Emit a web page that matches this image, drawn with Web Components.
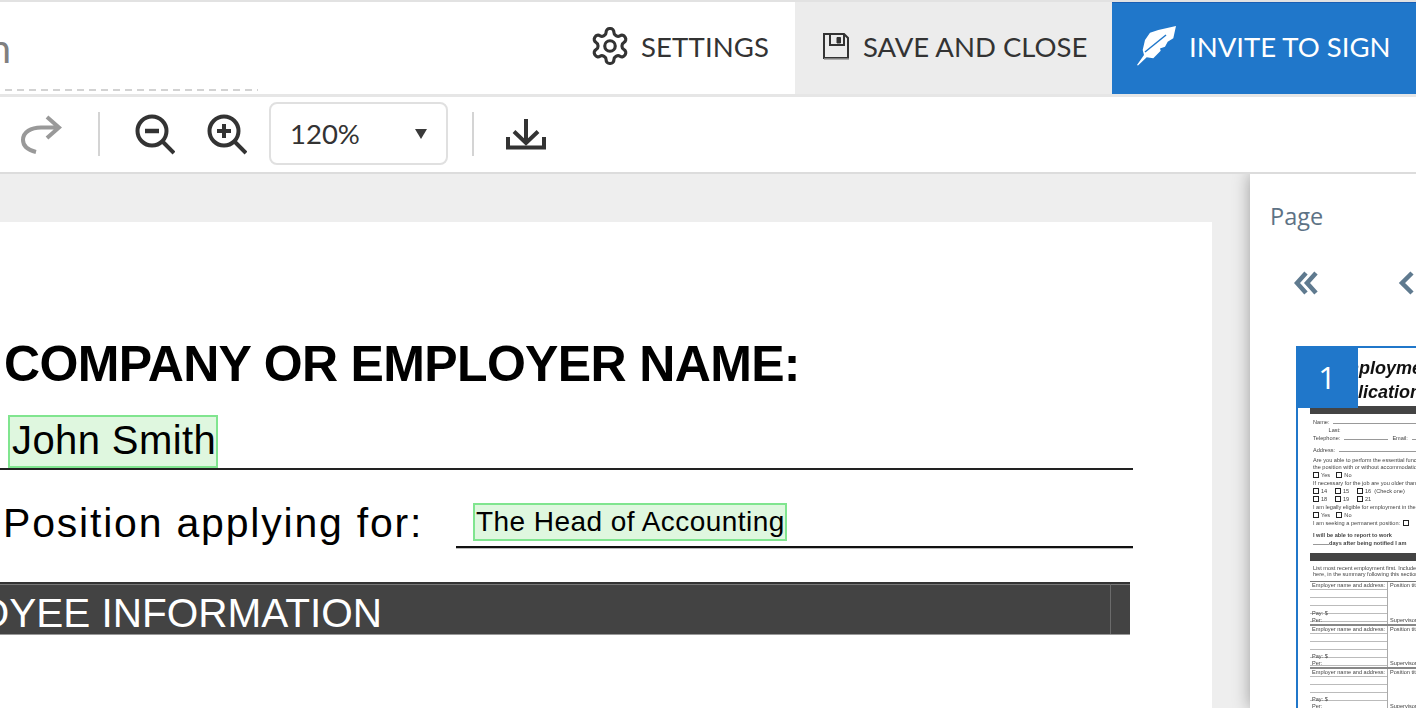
<!DOCTYPE html>
<html>
<head>
<meta charset="utf-8">
<title>Sign editor</title>
<style>
  html, body { margin: 0; height: 708px; overflow: hidden; background: #fff; }
  body { font-family: Lato, "Liberation Sans", sans-serif; color: #333; }
</style>
</head>
<body>
<sign-header></sign-header>
<sign-toolbar></sign-toolbar>
<sign-workspace>
  <doc-page></doc-page>
  <page-sidebar slot="side"></page-sidebar>
</sign-workspace>

<script>
(function () {
  function define(name, html) {
    const template = document.createElement("template");
    template.innerHTML = html;
    customElements.define(
      name,
      class extends HTMLElement {
        constructor() {
          super();
          this.attachShadow({ mode: "open" }).appendChild(template.content.cloneNode(true));
        }
      }
    );
  }

  define("head-btn", `
    <style>
      :host { display: flex; align-items: center; height: 92px; box-sizing: border-box; padding-bottom: 4px; font-size: 27.5px; white-space: nowrap; color: #333; }
      :host(.save) { background: #ececec; width: 317px; padding-left: 28px; gap: 14px; }
      :host(.settings) { width: 221px; padding-left: 15px; gap: 10px; letter-spacing: .15px; }
      :host(.invite) { background: #2077ca; color: #fff; width: 304px; padding-left: 25px; gap: 12px; box-shadow: inset 0 1px 0 #1a5fb4; }
      ::slotted(svg) { flex: none; display: block; }
    </style>
    <slot name="icon"></slot><slot></slot>`);

  define("sign-header", `
    <style>
      :host { display: flex; height: 97px; box-sizing: border-box; border-top: 2px solid #e2e2e2; border-bottom: 3px solid #e6e6e6; }
      .title { flex: 1; position: relative; overflow: hidden; }
      .name { width: 11px; height: 92px; display: flex; justify-content: flex-end; align-items: center; overflow: hidden; white-space: nowrap; font-size: 40px; color: #808080; }
      .dash { position: absolute; left: 5px; top: 87px; width: 253px; height: 2px; background: repeating-linear-gradient(90deg, #d2d2d2 0 7px, transparent 7px 12px); }
    </style>
    <div class="title"><div class="name">Employment Application</div><div class="dash"></div></div>
    <head-btn class="settings">
      <svg slot="icon" width="42" height="42" viewBox="0 0 24 24" fill="none" stroke="#333" stroke-width="1.8" stroke-linejoin="round"><path d="M12.22 2h-.44a2 2 0 0 0-2 2v.18a2 2 0 0 1-1 1.73l-.43.25a2 2 0 0 1-2 0l-.15-.08a2 2 0 0 0-2.73.73l-.22.38a2 2 0 0 0 .73 2.73l.15.1a2 2 0 0 1 1 1.72v.51a2 2 0 0 1-1 1.74l-.15.09a2 2 0 0 0-.73 2.73l.22.38a2 2 0 0 0 2.73.73l.15-.08a2 2 0 0 1 2 0l.43.25a2 2 0 0 1 1 1.73V20a2 2 0 0 0 2 2h.44a2 2 0 0 0 2-2v-.18a2 2 0 0 1 1-1.73l.43-.25a2 2 0 0 1 2 0l.15.08a2 2 0 0 0 2.73-.73l.22-.39a2 2 0 0 0-.73-2.73l-.15-.08a2 2 0 0 1-1-1.74v-.5a2 2 0 0 1 1-1.74l.15-.09a2 2 0 0 0 .73-2.73l-.22-.38a2 2 0 0 0-2.73-.73l-.15.08a2 2 0 0 1-2 0l-.43-.25a2 2 0 0 1-1-1.73V4a2 2 0 0 0-2-2z"/><circle cx="12" cy="12" r="3"/></svg>
      SETTINGS
    </head-btn>
    <head-btn class="save">
      <svg slot="icon" width="26" height="27" viewBox="0 0 26 27" fill="none" stroke="#333" stroke-width="2"><path d="M1 1H21L25 5V25H1Z"/><path d="M7 1V12H21V1"/><path d="M14 4.500H17.500V10H14Z" fill="#333" stroke-width="1"/><path d="M1 26H26" stroke="#999" stroke-width="1.500"/></svg>
      SAVE AND CLOSE
    </head-btn>
    <head-btn class="invite">
      <svg slot="icon" width="40" height="42" viewBox="0 0 40 42"><path d="M39 1L21.300 5L13 7.700L8 15L5.700 25L7 30L0 40L1 40.500L9.700 32.300L16.300 33.300L23.700 25.700L23 23.500L28 21.700L30.700 16.700L36.300 13.300Z" fill="#fff"/><path d="M8 27L29 10" stroke="#2077ca" stroke-width="1.500"/></svg>
      INVITE TO SIGN
    </head-btn>`);

  define("zoom-select", `
    <style>
      :host { display: flex; align-items: center; justify-content: space-between; box-sizing: border-box; width: 179px; height: 63px; border: 2px solid #e0e0e0; border-radius: 8px; padding: 0 19px 0 19px; font-size: 27.5px; color: #333; }
      svg { display: block; }
    </style>
    <slot></slot>
    <svg width="12" height="10" viewBox="0 0 12 10"><path d="M0 0H12L6 10Z" fill="#3a3a3a"/></svg>`);

  define("sign-toolbar", `
    <style>
      :host { display: flex; align-items: center; height: 77px; box-sizing: border-box; border-bottom: 2px solid #dcdcdc; padding: 0 0 2px 20px; }
      svg { display: block; flex: none; }
      .sep { width: 2px; height: 44px; background: #d4d4d4; flex: none; }
    </style>
    <svg width="42" height="40" viewBox="0 0 42 40" fill="none" stroke="#999" stroke-width="4"><path d="M27 3L39 13.500L27 24M39 13.500H21C11 13.500 3 18 3 26C3 32 8 36 16 38"/></svg>
    <div class="sep" style="margin-left:36px"></div>
    <svg style="margin-left:25px" width="50" height="42" viewBox="0 0 50 42" fill="none" stroke="#333" stroke-width="4"><circle cx="27" cy="18" r="14.500"/><path d="M37 28L49 40" stroke-width="4"/><path d="M20 18H34" stroke-width="4.500"/></svg>
    <svg style="margin-left:22px" width="50" height="42" viewBox="0 0 50 42" fill="none" stroke="#333" stroke-width="4"><circle cx="27" cy="18" r="14.500"/><path d="M37 28L49 40" stroke-width="4"/><path d="M20 18H34M27 11V25" stroke-width="4"/></svg>
    <zoom-select style="margin-left:22px">120%</zoom-select>
    <div class="sep" style="margin-left:24px"></div>
    <svg style="margin-left:32px" width="40" height="32" viewBox="0 0 40 32" fill="none" stroke="#333" stroke-width="4"><path d="M20 1V24M8 13.500L20 25L32 13.500"/><path d="M2 19V29.500H38V19"/></svg>`);

  define("sign-workspace", `
    <style>
      :host { display: flex; height: 534px; overflow: hidden; background: #eee; }
      .doc { flex: 1; min-width: 0; padding-top: 48px; position: relative; }
      .side { flex: none; width: 166px; position: relative; z-index: 1; }
      ::slotted(*) { display: block; }
    </style>
    <div class="doc"><slot></slot></div>
    <div class="side"><slot name="side"></slot></div>`);

  define("doc-field", `
    <style>
      :host { display: inline-flex; align-items: center; box-sizing: border-box; background: #dff7df; border: 2px solid #80e58f; color: #000; white-space: nowrap; font-family: "Liberation Sans", Arial, sans-serif; }
    </style>
    <slot></slot>`);

  define("doc-page", `
    <style>
      :host { display: block; width: 1212px; height: 486px; box-sizing: border-box; background: #fff; color: #000; font-family: "Liberation Sans", Arial, sans-serif; overflow: hidden; }
      h1 { margin: 0; padding: 117px 0 0 4px; height: 50px; line-height: 50px; font-size: 50px; font-weight: 700; letter-spacing: -0.65px; white-space: nowrap; box-sizing: content-box; }
      .name-row { margin-top: 26px; width: 1133px; height: 55px; box-sizing: border-box; padding: 0 0 0 8px; border-bottom: 2px solid #222; }
      .name-row doc-field { width: 210px; height: 53px; font-size: 40px; letter-spacing: .4px; padding: 0 0 2px 2px; }
      .pos-row { display: flex; margin-top: 33px; height: 45px; width: 1133px; }
      .pos-label { width: 456px; flex: none; font-size: 41px; line-height: 40px; letter-spacing: 1.8px; padding-left: 3px; box-sizing: border-box; white-space: nowrap; }
      .pos-value { flex: 1; border-bottom: 2px solid #111; height: 45px; padding-left: 17px; box-sizing: border-box; box-shadow: 0 1px 0 #bbb; }
      .pos-value doc-field { width: 314px; height: 38px; font-size: 28px; letter-spacing: .45px; padding-left: 1px; }
      .band { margin-top: 34px; width: 1130px; height: 53px; box-sizing: border-box; background: #434343; border-top: 2px solid #333; border-bottom: 1px solid #999; box-shadow: inset 0 1px 0 #777; display: flex; justify-content: space-between; }
      .band-text { width: 382px; height: 100%; box-sizing: border-box; padding-top: 8px; display: flex; justify-content: flex-end; align-items: center; overflow: hidden; white-space: nowrap; color: #fff; font-size: 40.5px; }
      .band-end { width: 19px; border-left: 1px solid #6b6b6b; }
    </style>
    <h1>COMPANY OR EMPLOYER NAME:</h1>
    <div class="name-row"><doc-field>John Smith</doc-field></div>
    <div class="pos-row">
      <div class="pos-label">Position applying for:</div>
      <div class="pos-value"><doc-field>The Head of Accounting</doc-field></div>
    </div>
    <div class="band"><div class="band-text">EMPLOYEE INFORMATION</div><div class="band-end"></div></div>`);

  define("page-sidebar", `
    <style>
      :host { display: block; height: 534px; background: #fff; box-shadow: 0 0 16px rgba(0,0,0,.35); overflow: hidden; }
      .label { padding: 28px 0 0 20px; font: 23.5px/28px "Open Sans", sans-serif; color: #5d7285; height: 28px; }
      .nav { display: flex; padding: 41px 0 0 44px; height: 24px; gap: 78px; }
      svg { display: block; flex: none; }
      .thumb { margin: 51px 0 0 46px; }
    </style>
    <div class="label">Page</div>
    <div class="nav">
      <svg width="26" height="24" viewBox="0 0 26 24" fill="none" stroke="#5f7a8f" stroke-width="4.500"><path d="M12 2L3 12L12 22M22 2L13 12L22 22"/></svg>
      <svg width="20" height="24" viewBox="0 0 20 24" fill="none" stroke="#5f7a8f" stroke-width="4.500"><path d="M14 2L4 12L14 22"/></svg>
    </div>
    <thumb-page class="thumb"></thumb-page>`);

  define("thumb-page", `
    <style>
      :host { display: block; position: relative; width: 300px; height: 520px; box-sizing: border-box; border: 2px solid #2077ca; background: #fff; color: #444; font: 5.6px/7px "Liberation Sans", sans-serif; }
      .badge { position: absolute; z-index: 1; left: -2px; top: -2px; width: 62px; height: 62px; background: #2077ca; color: #fff; font: 31px/62px "Open Sans", sans-serif; text-align: center; }
      .inner { filter: blur(.5px); }
      .title { font: italic 700 18px/24px "Liberation Sans", sans-serif; color: #111; height: 58px; padding-top: 8px; box-sizing: border-box; }
      .title div:first-child { padding-left: 33px; }
      .title div:last-child { padding-left: 25px; }
      .bar { background: #444; height: 8px; margin-left: 12px; }
      .ln { padding-left: 15px; white-space: nowrap; height: 8px; line-height: 8px; }
      .rule { display: inline-block; border-bottom: 1px solid #999; height: 5px; vertical-align: baseline; margin: 0 4px; }
      .box { display: inline-block; width: 4px; height: 4px; border: 1px solid #222; margin-right: 2px; vertical-align: -1px; }
      .b { font-weight: 700; }
      .tbl { margin: 3px 0 0 12px; }
      .row { display: flex; height: 43px; box-sizing: border-box; border-top: 1px solid #777; }
      .row + .row { border-top: 2px solid #888; }
      .cell { display: flex; flex-direction: column; justify-content: space-between; padding-left: 2px; line-height: 7px; }
      .cell.l { width: 78px; flex: none; box-sizing: border-box; border-right: 1px solid #aaa; background: repeating-linear-gradient(transparent 0 7px, #bbb 7px 8px); }
    </style>
    <div class="badge">1</div>
    <div class="inner">
      <div class="title"><div>Employment</div><div>Application</div></div>
      <div class="bar"></div>
      <div class="ln" style="margin-top:4px">Name:<span class="rule" style="width:200px"></span></div>
      <div class="ln">&nbsp;&nbsp;&nbsp;&nbsp;&nbsp;&nbsp;&nbsp;&nbsp;&nbsp;&nbsp;Last:</div>
      <div class="ln">Telephone:<span class="rule" style="width:44px"></span>Email:<span class="rule" style="width:80px"></span></div>
      <div class="ln" style="margin-top:4px">Address:<span class="rule" style="width:200px"></span></div>
      <div class="ln" style="margin-top:3px;height:7px;line-height:7px">Are you able to perform the essential functions of this job</div>
      <div class="ln" style="height:7px;line-height:7px">the position with or without accommodation?</div>
      <div class="ln"><span class="box"></span>Yes &nbsp;&nbsp;&nbsp;<span class="box"></span>No</div>
      <div class="ln">If necessary for the job are you older than</div>
      <div class="ln"><span class="box"></span>14 &nbsp;&nbsp;&nbsp;&nbsp;<span class="box"></span>15 &nbsp;&nbsp;&nbsp;&nbsp;<span class="box"></span>16 &nbsp;(Check one)</div>
      <div class="ln"><span class="box"></span>18 &nbsp;&nbsp;&nbsp;&nbsp;<span class="box"></span>19 &nbsp;&nbsp;&nbsp;&nbsp;<span class="box"></span>21</div>
      <div class="ln">I am legally eligible for employment in the</div>
      <div class="ln"><span class="box"></span>Yes &nbsp;&nbsp;&nbsp;<span class="box"></span>No</div>
      <div class="ln">I am seeking a permanent position: &nbsp;<span class="box"></span></div>
      <div class="ln b" style="margin-top:5px;height:7px;line-height:7px">I will be able to report to work</div>
      <div class="ln b" style="height:7px;line-height:7px"><span class="rule" style="width:16px;margin:0"></span>days after being notified I am</div>
      <div class="bar" style="margin-top:7px"></div>
      <div class="ln" style="margin-top:4px;height:6px;line-height:6px">List most recent employment first. Include summer</div>
      <div class="ln" style="height:7px;line-height:6px">here, in the summary following this section or on</div>
      <div class="tbl">
        <div class="row"><div class="cell l"><span>Employer name and address:</span><span>Pay: $<br>Per:</span></div><div class="cell"><span>Position title</span><span>Supervisor</span></div></div>
        <div class="row"><div class="cell l"><span>Employer name and address:</span><span>Pay: $<br>Per:</span></div><div class="cell"><span>Position title</span><span>Supervisor</span></div></div>
        <div class="row"><div class="cell l"><span>Employer name and address:</span><span>Pay: $<br>Per:</span></div><div class="cell"><span>Position title</span><span>Supervisor</span></div></div>
      </div>
    </div>`);
})();
</script>
</body>
</html>
